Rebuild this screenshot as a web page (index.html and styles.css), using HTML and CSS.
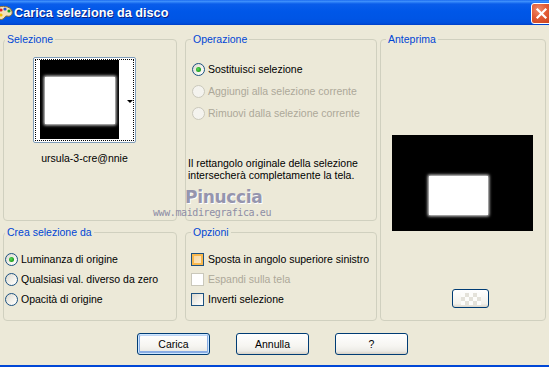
FILE: index.html
```html
<!DOCTYPE html>
<html lang="it">
<head>
<meta charset="utf-8">
<title>Carica selezione da disco</title>
<link rel="stylesheet" href="styles.css">
</head>
<body>
<div class="window">
  <div class="titlebar">
    <svg class="app-icon" width="13" height="16" viewBox="0 0 13 16">
      <path d="M-3 3 C2 0 10 1 12 6 C13 10 10 12 7 11 C5 10.5 5 13 3 14 C-1 16 -4 12 -3 3 Z" fill="#F3E2B8" stroke="#8A6A30" stroke-width="1"/>
      <circle cx="1" cy="5" r="1.6" fill="#E02020"/>
      <circle cx="5" cy="4" r="1.6" fill="#2050E0"/>
      <circle cx="9" cy="6" r="1.6" fill="#20A020"/>
      <circle cx="1" cy="10" r="1.6" fill="#F0C000"/>
    </svg>
    <span class="title">Carica selezione da disco</span>
    <span class="close" aria-label="Chiudi">
      <svg width="13" height="13" viewBox="0 0 13 13"><path d="M2.5 2.5 L10.5 10.5 M10.5 2.5 L2.5 10.5" stroke="#fff" stroke-width="2.2" stroke-linecap="square"/></svg>
    </span>
  </div>

  <div class="client">
    <div class="groups">
      <fieldset class="group g-sel">
        <legend>Selezione</legend>
        <div class="thumb">
          <div class="thumb-img"><div class="glow glow-thumb"></div></div>
          <div class="thumb-strip"><span class="arrow"></span></div>
        </div>
        <div class="thumb-name">ursula-3-cre@nnie</div>
      </fieldset>

      <fieldset class="group g-op">
        <legend>Operazione</legend>
        <div class="opt-list op-list">
          <label class="opt"><span class="radio checked"></span>Sostituisci selezione</label>
          <label class="opt disabled"><span class="radio"></span>Aggiungi alla selezione corrente</label>
          <label class="opt disabled"><span class="radio"></span>Rimuovi dalla selezione corrente</label>
        </div>
        <p class="note">Il rettangolo originale della selezione<br>intersecherà completamente la tela.</p>
      </fieldset>

      <fieldset class="group g-prev">
        <legend>Anteprima</legend>
        <div class="preview"><div class="glow glow-prev"></div></div>
        <span class="mini-btn"><span class="checker"></span></span>
      </fieldset>

      <fieldset class="group g-crea">
        <legend>Crea selezione da</legend>
        <div class="opt-list crea-list">
          <label class="opt"><span class="radio checked"></span>Luminanza di origine</label>
          <label class="opt"><span class="radio"></span>Qualsiasi val. diverso da zero</label>
          <label class="opt"><span class="radio"></span>Opacità di origine</label>
        </div>
      </fieldset>

      <fieldset class="group g-opt">
        <legend>Opzioni</legend>
        <div class="opt-list opz-list">
          <label class="opt"><span class="check hover"></span>Sposta in angolo superiore sinistro</label>
          <label class="opt disabled"><span class="check"></span>Espandi sulla tela</label>
          <label class="opt"><span class="check"></span>Inverti selezione</label>
        </div>
      </fieldset>
    </div>

    <div class="buttons">
      <button class="btn default">Carica</button>
      <button class="btn">Annulla</button>
      <button class="btn">?</button>
    </div>
  </div>

  <div class="watermark">
    <div class="wm-name">Pinuccia</div>
    <div class="wm-url">www.maidiregrafica.eu</div>
  </div>
</div>
</body>
</html>
```

FILE: styles.css
```css
html, body {
  margin: 0;
  padding: 0;
  background: #ECE9D8;
}

.window {
  position: relative;
  width: 549px;
  height: 367px;
  overflow: hidden;
  background: #ECE9D8;
  font-family: "Liberation Sans", Arial, sans-serif;
  font-size: 10.5px;
  color: #000;
  display: flex;
  flex-direction: column;
  box-sizing: border-box;
  border-bottom: 2px solid #0047D6;
}

/* Title bar */
.titlebar {
  height: 25px;
  flex: none;
  display: flex;
  align-items: center;
  overflow: hidden;
  background: linear-gradient(#1D6CF0 0%, #3C8EFB 6%, #0A5DEA 16%, #0057E8 45%, #0055E5 75%, #0050DD 92%, #0040C8 100%);
}
.app-icon {
  flex: none;
  margin-top: 1px;
  margin-right: 1px;
}
.title {
  font-weight: bold;
  font-size: 12.7px;
  color: #fff;
  text-shadow: 1px 1px 0 #0A1E80;
  flex: 1;
  white-space: nowrap;
}
.close {
  flex: none;
  width: 21px;
  height: 21px;
  margin-right: -3px;
  margin-top: 1px;
  box-sizing: border-box;
  border: 1px solid #fff;
  border-radius: 3px;
  background: radial-gradient(circle at 35% 30%, #F08A6A 0%, #E25B35 45%, #C8401A 100%);
  display: flex;
  align-items: center;
  justify-content: center;
}

/* Client area */
.client {
  flex: 1;
  display: flex;
  flex-direction: column;
  padding-top: 8px;
}

.groups {
  display: grid;
  grid-template-columns: 174px 8px 192px 3px 166px;
  grid-template-rows: 188px 95px;
  row-gap: 5px;
  padding-left: 3px;
}

.group {
  margin: 0;
  padding: 0;
  min-width: 0;
  border: 1px solid #D0D0BF;
  border-radius: 4px;
  box-sizing: border-box;
}
.group legend {
  color: #0046D5;
  padding: 0 2px;
  margin-left: 5px;
  line-height: 13px;
}
.g-sel legend, .g-crea legend {
  margin-left: 1px;
}

.g-sel  { grid-column: 1; grid-row: 1; }
.g-op   { grid-column: 3; grid-row: 1; }
.g-prev { grid-column: 5; grid-row: 1 / span 2; }
.g-crea { grid-column: 1; grid-row: 2; }
.g-opt  { grid-column: 3; grid-row: 2; }

/* Selezione */
.g-sel {
  padding-top: 11px;
}
.thumb {
  margin-left: 29px;
  width: 103px;
  height: 86px;
  box-sizing: border-box;
  border: 1px solid #7F9DB9;
  border-radius: 2px;
  background: #fff;
  padding: 2px 0 0 6px;
  display: flex;
  outline: 1px dotted #000;
  outline-offset: -3px;
}
.thumb-img {
  width: 79px;
  height: 79px;
  background: #000;
  padding: 16px 0 0 4px;
  box-sizing: border-box;
}
.glow {
  background: #fff;
}
.glow-thumb {
  width: 70px;
  height: 47px;
  margin: 1px 0 0 1px;
  box-shadow: 0 0 3px 1px #fff;
}
.thumb-strip {
  width: 14px;
  display: flex;
  align-items: center;
  justify-content: flex-end;
  padding-right: 2px;
}
.arrow {
  width: 0;
  height: 0;
  border-left: 3px solid transparent;
  border-right: 3px solid transparent;
  border-top: 3px solid #000;
  margin-top: 1px;
}
.thumb-name {
  margin-left: 29px;
  width: 103px;
  text-align: center;
  margin-top: 9px;
  line-height: 13px;
}

/* Radios & checkboxes */
.opt-list {
  display: flex;
  flex-direction: column;
}
.opt {
  display: flex;
  align-items: center;
  gap: 3px;
  white-space: nowrap;
}
.opt.disabled {
  color: #ACA899;
}
.radio {
  width: 13px;
  height: 13px;
  flex: none;
  box-sizing: border-box;
  border-radius: 50%;
  border: 1px solid #1C5180;
  background: linear-gradient(135deg, #DCD9CE 0%, #F4F3EE 60%, #fff 100%);
  display: flex;
  align-items: center;
  justify-content: center;
}
.radio.checked::after {
  content: "";
  width: 5px;
  height: 5px;
  border-radius: 50%;
  background: radial-gradient(circle at 40% 40%, #5BDC5B 0%, #21A121 60%, #1A8A1A 100%);
}
.disabled .radio {
  border-color: #CAC8BB;
  background: #F4F3EE;
}
.check {
  width: 13px;
  height: 13px;
  flex: none;
  box-sizing: border-box;
  border: 1px solid #1C5180;
  background: linear-gradient(135deg, #DCD9CE 0%, #F4F3EE 60%, #fff 100%);
}
.check.hover {
  box-shadow: inset 0 0 0 2px #F8B84E;
  background: linear-gradient(135deg, #F5D49A 0%, #FBEBCB 100%);
}
.disabled .check {
  border-color: #CAC8BB;
  background: #fff;
}

/* Operazione */
.g-op {
  padding-top: 12px;
}
.op-list {
  padding-left: 6px;
}
.op-list .opt {
  height: 22px;
}
.note {
  margin: 33px 0 0 2px;
  line-height: 12px;
}

/* Crea / Opzioni */
.g-crea, .g-opt {
  padding-top: 10px;
}
.crea-list {
  padding-left: 1px;
}
.opz-list {
  padding-left: 5px;
}
.crea-list .opt, .opz-list .opt {
  height: 20px;
}
.opz-list .opt {
  gap: 4px;
}

/* Anteprima */
.g-prev {
  padding-top: 89px;
  display: flex;
  flex-direction: column;
  align-items: flex-start;
}
.preview {
  margin-left: 11px;
  width: 141px;
  height: 96px;
  background: #000;
  padding: 41px 0 0 37px;
  box-sizing: border-box;
}
.glow-prev {
  width: 59px;
  height: 39px;
  box-shadow: 0 0 3px 1px #fff;
}
.mini-btn {
  margin: 58px 0 0 71px;
  width: 37px;
  height: 19px;
  box-sizing: border-box;
  border: 1px solid #003C74;
  border-radius: 3px;
  background: linear-gradient(#FFFFFF, #F3F2EC 80%, #DAD6CB);
  display: flex;
  align-items: center;
  justify-content: center;
}
.checker {
  width: 20px;
  height: 12px;
  background: repeating-conic-gradient(#E4E2DA 0 25%, #FDFDFB 0 50%) 0 0 / 8px 8px;
}

/* Buttons */
.buttons {
  display: flex;
  gap: 26px;
  padding: 12px 0 0 137px;
}
.btn {
  width: 73px;
  height: 22px;
  margin: 0;
  padding: 0;
  box-sizing: border-box;
  border: 1px solid #003C74;
  border-radius: 3px;
  background: linear-gradient(#FFFFFF 0%, #F6F5F1 60%, #ECEBE6 85%, #D6D0C5 100%);
  font-family: "Liberation Sans", Arial, sans-serif;
  font-size: 10.5px;
  color: #000;
}
.btn.default {
  box-shadow: inset 0 0 0 1px #CEE7FF, inset 0 -1px 0 2px #89ADE4, inset 1px 1px 0 1px #BCD4F6;
}

/* Watermark overlay */
.watermark {
  position: absolute;
  left: 153px;
  top: 187px;
  pointer-events: none;
}
.wm-name, .wm-url {
  white-space: nowrap;
}
.wm-name {
  margin-left: 32px;
  font-family: "DejaVu Sans", sans-serif;
  font-weight: bold;
  font-size: 17px;
  line-height: 20px;
  color: #9595AE;
  text-shadow: 1px 1px 0 #fff;
  letter-spacing: -0.3px;
}
.wm-url {
  font-family: "DejaVu Sans Mono", monospace;
  font-size: 10px;
  line-height: 12px;
  color: #8E8EA6;
  letter-spacing: -0.4px;
}
```
